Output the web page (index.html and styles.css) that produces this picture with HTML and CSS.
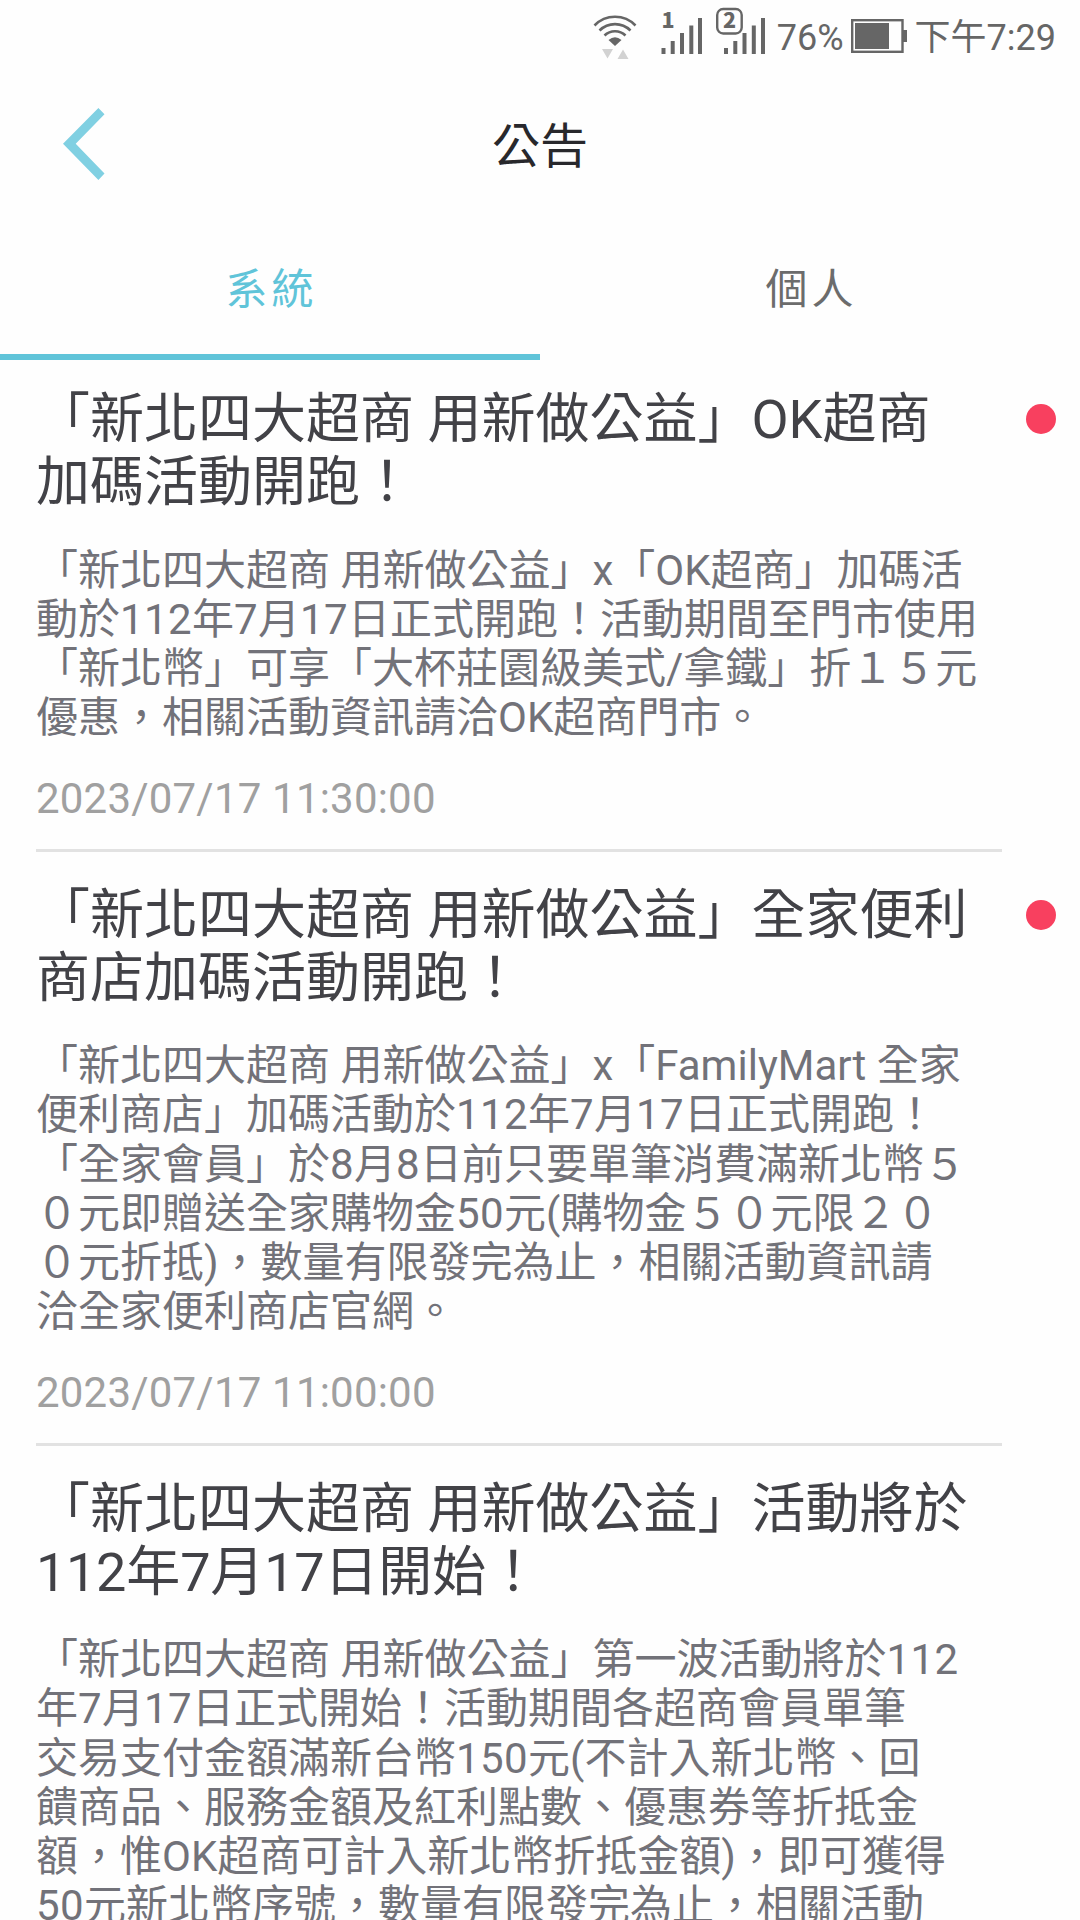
FILE: index.html
```html
<!DOCTYPE html>
<html lang="zh-Hant">
<head>
<meta charset="utf-8">
<title>公告</title>
<link rel="stylesheet" href="styles.css">
</head>
<body>
<div class="screen">
  <div class="status">
    <svg class="wifi" width="46" height="64" viewBox="0 0 46 64">
      <g fill="none" stroke="#666" stroke-width="2.6">
        <path d="M1.500 25.500a28.500 28.500 0 0 1 41 0"/>
        <path d="M6.500 30.500a22 22 0 0 1 31 0"/>
        <path d="M11.500 35.500a15 15 0 0 1 21 0"/>
      </g>
      <path d="M22 46l-6.500-6q6.500-5.500 13 0z" fill="#666"/>
      <path d="M9 49h11l-5.500 9.500zM24.500 59h11l-5.500-9.500z" fill="#d2d2d2"/>
    </svg>
    <svg class="signal" width="50" height="64" viewBox="0 0 50 64">
      <text class="sim" x="9.500" y="28">1</text>
      <path d="M9.500 48h4v6h-4zM18.700 41h4v13h-4zM28 33h4v21h-4zM37.300 25.500h4V54h-4zM46 18h4v36h-4z" fill="#666"/>
    </svg>
    <svg class="signal-two" width="52" height="64" viewBox="0 0 52 64">
      <rect x="1.200" y="9" width="24.500" height="24.500" rx="6" fill="none" stroke="#666" stroke-width="2.400"/>
      <text class="sim" x="7" y="28">2</text>
      <path d="M8 48h4v6H8zM17.300 41h4v13h-4zM26.500 33h4v21h-4zM35.800 25.500h4V54h-4zM45 18h4v36h-4z" fill="#666"/>
    </svg>
    <span class="percent">76%</span>
    <svg class="battery" width="56" height="64" viewBox="0 0 56 64">
      <rect x="1.200" y="20.200" width="50.300" height="31.600" fill="none" stroke="#666" stroke-width="2.400"/>
      <path d="M4 23h34v26H4zM52 30h4v12h-4z" fill="#666"/>
    </svg>
    <span class="time">下午7:29</span>
  </div>
  <header class="header">
    <svg class="back" width="42" height="72" viewBox="0 0 42 72"><path d="M35.400 0L41.500 6.300 12.700 35.800 41.500 65.600 35.400 72 0 35.800z" fill="#80d0e2"/></svg>
    <h1 class="heading">公告</h1>
  </header>
  <nav class="tabs">
    <div class="tab active">系統</div>
    <div class="tab">個人</div>
  </nav>
  <main class="list">
    <article class="item">
      <div class="content">
        <h2 class="title">「新北四大超商 用新做公益」OK超商<br>加碼活動開跑！</h2>
        <p class="text">「新北四大超商 用新做公益」x「OK超商」加碼活<br>動於<span class="num">112</span>年<span class="num">7</span>月<span class="num">17</span>日正式開跑！活動期間至門市使用<br>「新北幣」可享「大杯莊園級美式/拿鐵」折１５元<br>優惠，相關活動資訊請洽OK超商門市。</p>
        <time class="date">2023/07/17 11:30:00</time>
      </div>
      <span class="dot"></span>
    </article>
    <article class="item">
      <div class="content">
        <h2 class="title">「新北四大超商 用新做公益」全家便利<br>商店加碼活動開跑！</h2>
        <p class="text">「新北四大超商 用新做公益」x「FamilyMart 全家<br>便利商店」加碼活動於<span class="num">112</span>年<span class="num">7</span>月<span class="num">17</span>日正式開跑！<br>「全家會員」於<span class="num">8</span>月<span class="num">8</span>日前只要單筆消費滿新北幣５<br>０元即贈送全家購物金<span class="num">50</span>元(購物金５０元限２０<br>０元折抵)，數量有限發完為止，相關活動資訊請<br>洽全家便利商店官網。</p>
        <time class="date">2023/07/17 11:00:00</time>
      </div>
      <span class="dot"></span>
    </article>
    <article class="item">
      <div class="content">
        <h2 class="title">「新北四大超商 用新做公益」活動將於<br><span class="title-num">112</span>年<span class="title-num">7</span>月<span class="title-num">17</span>日開始！</h2>
        <p class="text">「新北四大超商 用新做公益」第一波活動將於<span class="num">112</span><br>年<span class="num">7</span>月<span class="num">17</span>日正式開始！活動期間各超商會員單筆<br>交易支付金額滿新台幣<span class="num">150</span>元(不計入新北幣、回<br>饋商品、服務金額及紅利點數、優惠券等折抵金<br>額，惟OK超商可計入新北幣折抵金額)，即可獲得<br><span class="num">50</span>元新北幣序號，數量有限發完為止，相關活動</p>
      </div>
    </article>
  </main>
</div>
</body>
</html>
```
FILE: styles.css
```css
* { box-sizing: border-box; }
body {
  margin: 0;
  background: #fefefe;
  font-family: Roboto, "Noto Sans CJK TC", sans-serif;
}
.screen {
  width: 1080px;
  height: 1920px;
  overflow: hidden;
  display: flex;
  flex-direction: column;
}
.status {
  flex: none;
  height: 72px;
  padding-right: 24px;
  display: flex;
  justify-content: flex-end;
  align-items: flex-start;
  color: #666;
  font-size: 36px;
  line-height: 76px;
  white-space: nowrap;
}
.status svg { flex: none; }
.signal { margin-left: 13.500px; }
.signal-two { margin-left: 14px; }
.sim {
  font: 900 21.500px "Noto Sans CJK TC", sans-serif;
  fill: #666;
}
.percent { margin-left: 8.500px; }
.battery { margin-left: 7px; }
.time { margin-left: 8px; }
.header {
  flex: none;
  height: 144px;
  display: grid;
  grid-template-columns: 1fr auto 1fr;
  align-items: center;
}
.back { margin-left: 63px; }
.heading {
  margin: 0;
  padding-top: 6px;
  color: #28282c;
  font-size: 48px;
  font-weight: 400;
  line-height: 56px;
}
.tabs {
  flex: none;
  height: 144px;
  display: flex;
}
.tab {
  flex: 1;
  padding: 4px 0 0 3px;
  border-bottom: 6px solid transparent;
  color: #6c6c6c;
  font-size: 42px;
  letter-spacing: 4px;
  line-height: 139px;
  text-align: center;
}
.tab.active {
  color: #60c4d9;
  border-color: #60c4d9;
}
.list {
  flex: none;
  margin-top: -4px;
}
.item {
  display: flex;
  padding: 0 24px 0 36px;
}
.content {
  width: 966px;
  padding: 32px 0 25px;
  border-bottom: 3px solid #e2e2e2;
  display: flex;
  flex-direction: column;
  white-space: nowrap;
}
.title {
  margin: 0;
  color: #424247;
  font-size: 54px;
  font-weight: 400;
  line-height: 63.3px;
}
.title-num { letter-spacing: -0.3px; }
.text {
  margin: 31px 0 0;
  color: #727279;
  font-size: 42px;
  line-height: 49.200px;
}
.num { letter-spacing: 0.4px; }
.date {
  margin-top: 32px;
  color: #a0a0a0;
  font-size: 42px;
  letter-spacing: 0.2px;
  line-height: 49.200px;
}
.dot {
  width: 30px;
  height: 30px;
  margin: 48px 0 0 24px;
  border-radius: 50%;
  background: #f8405f;
}
```
